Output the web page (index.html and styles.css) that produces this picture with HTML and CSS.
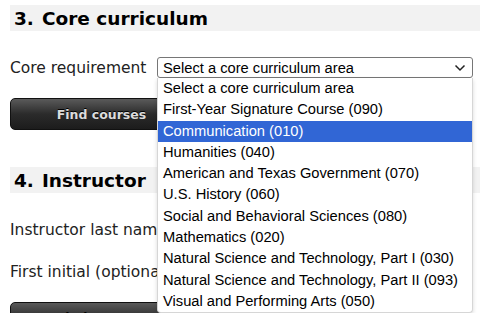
FILE: index.html
```html
<!DOCTYPE html>
<html>
<head>
<meta charset="utf-8">
<link rel="stylesheet" href="styles.css">
</head>
<body>
<div class="page">
  <section class="sec">
    <h2 class="head"><span class="num">3.</span>Core curriculum</h2>
    <div class="row">
      <span class="label">Core requirement</span>
      <div class="selwrap">
        <div class="select">
          <span>Select a core curriculum area</span>
          <svg class="chev" width="12" height="8" viewBox="0 0 12 8"><path d="M1.5 1.5 L6 6 L10.5 1.5" fill="none" stroke="#222" stroke-width="1.5"/></svg>
        </div>
        <ul class="list">
          <li>Select a core curriculum area</li>
          <li>First-Year Signature Course (090)</li>
          <li class="hl">Communication (010)</li>
          <li>Humanities (040)</li>
          <li>American and Texas Government (070)</li>
          <li>U.S. History (060)</li>
          <li>Social and Behavioral Sciences (080)</li>
          <li>Mathematics (020)</li>
          <li>Natural Science and Technology, Part I (030)</li>
          <li>Natural Science and Technology, Part II (093)</li>
          <li>Visual and Performing Arts (050)</li>
        </ul>
      </div>
    </div>
    <button class="btn">Find courses</button>
  </section>
  <section class="sec sec2">
    <h2 class="head"><span class="num">4.</span>Instructor</h2>
    <div class="row"><span class="label">Instructor last name</span></div>
    <div class="row row2"><span class="label">First initial (optional)</span></div>
    <button class="btn">Find courses</button>
  </section>
</div>
</body>
</html>
```
FILE: styles.css
```css
html, body { margin: 0; padding: 0; background: #fff; overflow: hidden; }
body { width: 480px; height: 313px; }
.page { padding: 5px 0 0 10px; font-family: "DejaVu Sans", Verdana, sans-serif; color: #111; }
.head {
  margin: 0;
  background: #f2f2f2;
  height: 26px;
  line-height: 27px;
  padding-left: 4px;
  font-size: 18.5px;
  font-weight: bold;
  color: #000;
}
.num { margin-right: 8px; }
.row { display: flex; align-items: center; margin-top: 26px; height: 21px; }
.label { font-size: 15.5px; width: 147px; flex: none; white-space: nowrap; color: #222; }
.selwrap { position: relative; width: 316px; }
.select {
  box-sizing: border-box;
  height: 21px;
  border: 1px solid #767676;
  border-radius: 3px;
  display: flex;
  align-items: center;
  justify-content: space-between;
  padding: 0 6px 0 5px;
  font-family: "Liberation Sans", Arial, sans-serif;
  font-size: 14.7px;
  color: #000;
}
.chev { display: block; }
.list {
  position: absolute;
  left: 0; top: 21px;
  width: 316px;
  box-sizing: border-box;
  margin: 0; padding: 0;
  list-style: none;
  background: #fff;
  border: 1px solid #d6d6d6;
  border-top: none;
  border-radius: 0 0 4px 4px;
  box-shadow: 0 2px 4px rgba(0,0,0,0.15);
  font-family: "Liberation Sans", Arial, sans-serif;
  font-size: 14.7px;
  color: #000;
  z-index: 2;
}
.list li { height: 21.3px; line-height: 21px; padding-left: 5px; white-space: nowrap; }
.list li.hl { background: #3166d5; color: #fff; }
.btn {
  display: block;
  margin-top: 20px;
  width: 183px;
  height: 32px;
  border: 1px solid #111;
  border-radius: 5px;
  background: linear-gradient(#5a5a5a, #2b2b2b 50%, #1c1c1c);
  color: #dcdcdc;
  font-family: "DejaVu Sans", Verdana, sans-serif;
  font-weight: bold;
  font-size: 12.5px;
  text-shadow: 0 -1px 0 #000;
  padding: 0;
}
.sec2 { margin-top: 37px; }
.sec2 .row { margin-top: 26px; }
.sec2 .row2 { margin-top: 21px; }
.sec2 .btn { margin-top: 20px; }
```
